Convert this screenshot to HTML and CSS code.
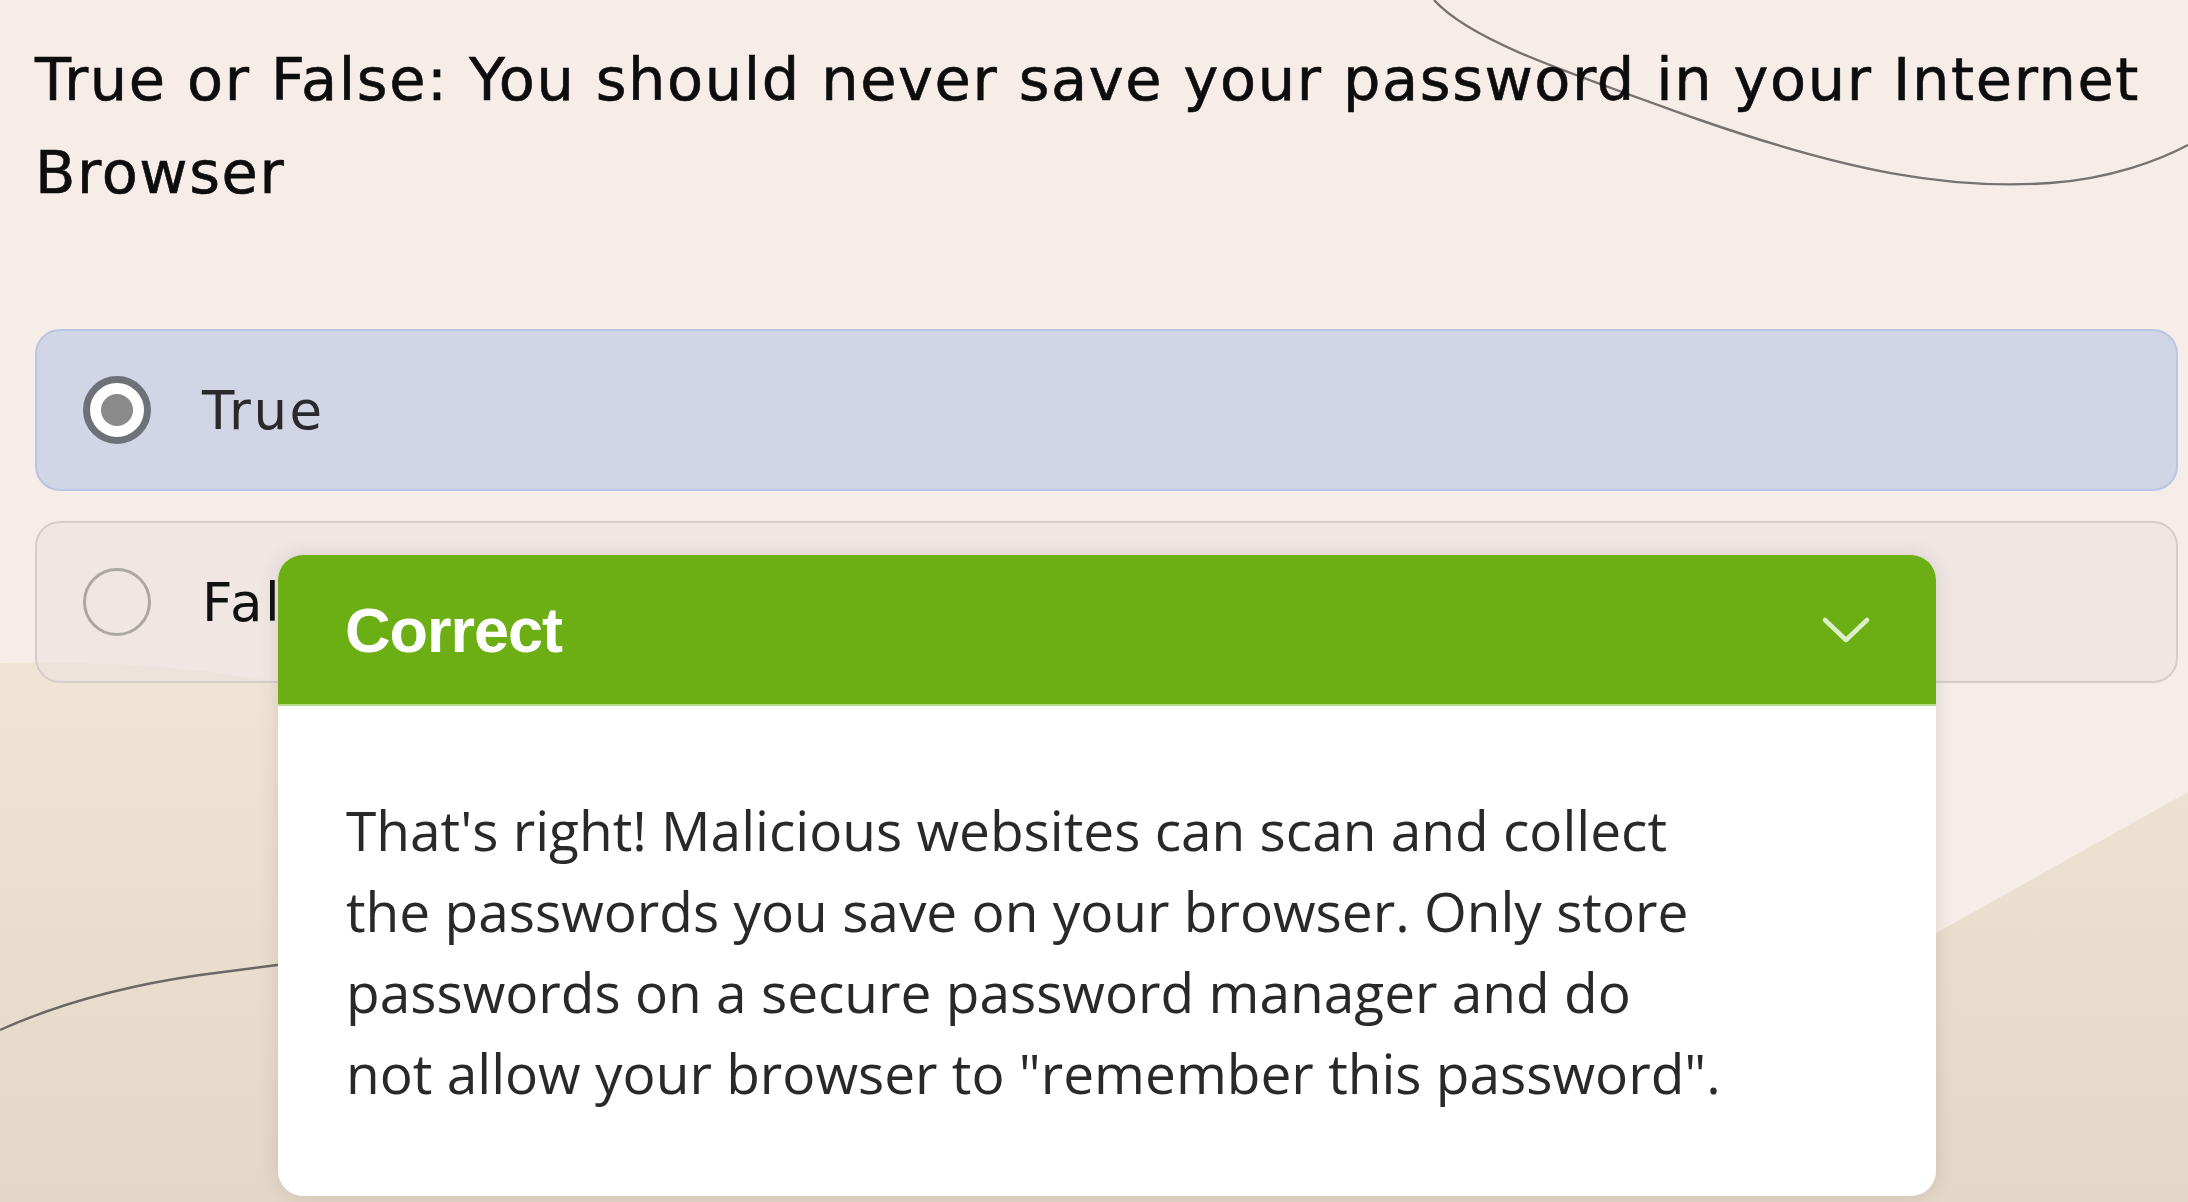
FILE: index.html
```html
<!DOCTYPE html>
<html lang="en">
<head>
<meta charset="utf-8">
<title>Quiz question</title>
<link rel="stylesheet" href="styles.css">
</head>
<body>
<div class="backdrop">
  <svg class="bg-art" width="2188" height="1202" viewBox="0 0 2188 1202" xmlns="http://www.w3.org/2000/svg">
    <defs>
      <linearGradient id="sand" x1="0" y1="0" x2="0" y2="1">
        <stop offset="0" stop-color="#f0e4d4"/>
        <stop offset="1" stop-color="#e3d7c7"/>
      </linearGradient>
    </defs>
    <path d="M0,663 C250,660 340,690 500,760 C900,930 1300,1200 1700,1065 L2188,792 V1202 H0 Z" fill="url(#sand)"/>
    <path d="M1434,0 C1470,40 1560,70 1700,120 C1850,172 1950,190 2050,183 C2110,179 2160,160 2188,145" fill="none" stroke="#767272" stroke-width="2.4"/>
    <path d="M0,1030 C60,1003 130,985 200,975 C240,970 270,966 300,962" fill="none" stroke="#6a6664" stroke-width="2.4"/>
  </svg>
</div>

<main class="quiz">
  <h1 class="question">True or False: You should never save your password in your Internet Browser</h1>
  <div class="options">
    <label class="option option-selected">
      <span class="radio radio-checked"><span class="radio-dot"></span></span>
      <span class="option-text">True</span>
    </label>
    <label class="option">
      <span class="radio"></span>
      <span class="option-text option-text-dark">False</span>
    </label>
  </div>
</main>

<section class="feedback">
  <header class="feedback-head">
    <span class="feedback-title">Correct</span>
    <svg class="chevron" width="48" height="26" viewBox="0 0 48 26" xmlns="http://www.w3.org/2000/svg">
      <path d="M3,3 L24,23 L45,3" fill="none" stroke="#dcefc9" stroke-width="4.5" stroke-linecap="round" stroke-linejoin="round"/>
    </svg>
  </header>
  <div class="feedback-body">
    <p class="feedback-text">That's right! Malicious websites can scan and collect<br>the passwords you save on your browser. Only store<br>passwords on a secure password manager and do<br>not allow your browser to "remember this password".</p>
  </div>
</section>
</body>
</html>
```

FILE: styles.css
```css
html, body {
  margin: 0;
  padding: 0;
}

body {
  width: 2188px;
  height: 1202px;
  overflow: hidden;
  background: #f6ede8;
  position: relative;
  font-family: "DejaVu Sans", "Noto Sans", sans-serif;
}

.backdrop {
  position: absolute;
  inset: 0;
  z-index: 0;
}

.bg-art {
  display: block;
}

.quiz {
  position: relative;
  z-index: 1;
  padding: 33px 10px 0 35px;
}

.question {
  margin: 0;
  font-size: 59px;
  line-height: 93px;
  font-weight: normal;
  color: #0d0d0d;
  letter-spacing: 1.6px;
  -webkit-text-stroke: 0.6px #0d0d0d;
}

.options {
  margin-top: 110px;
  display: flex;
  flex-direction: column;
  gap: 30px;
}

.option {
  box-sizing: border-box;
  height: 162px;
  display: flex;
  align-items: center;
  gap: 51px;
  padding-left: 46px;
  border: 2px solid #d6cdca;
  border-radius: 25px;
  background: rgba(236, 226, 224, 0.62);
}

.option-selected {
  border-color: #b9c5e3;
  background: #d1d5e5;
}

.radio {
  box-sizing: border-box;
  width: 68px;
  height: 68px;
  border-radius: 50%;
  border: 3px solid #aca7a4;
  display: flex;
  align-items: center;
  justify-content: center;
  flex: none;
}

.radio-checked {
  border: 7px solid #6f7179;
  background: #ffffff;
}

.radio-dot {
  width: 32px;
  height: 32px;
  border-radius: 50%;
  background: #8a8a8a;
}

.option-text {
  font-size: 53px;
  color: #2a2a2c;
  letter-spacing: 2.5px;
}

.option-text-dark {
  color: #111111;
}

.feedback {
  position: absolute;
  z-index: 2;
  left: 278px;
  top: 555px;
  width: 1658px;
  height: 641px;
  background: #ffffff;
  border-radius: 25px;
  overflow: hidden;
  box-shadow: 0 0 18px rgba(90, 70, 60, 0.16);
}

.feedback-head {
  box-sizing: border-box;
  height: 151px;
  background: #6caf14;
  border-bottom: 2px solid #b6db8c;
  display: flex;
  align-items: center;
  justify-content: space-between;
  padding: 0 66px 0 67px;
}

.feedback-title {
  font-family: "Liberation Sans", Arial, sans-serif;
  font-weight: bold;
  font-size: 63px;
  letter-spacing: -1px;
  color: #ffffff;
}

.chevron {
  display: block;
}

.feedback-body {
  padding: 83px 0 0 68px;
}

.feedback-text {
  margin: 0;
  width: 1440px;
  font-family: "Open Sans", "Noto Sans", sans-serif;
  font-size: 55px;
  line-height: 81px;
  color: #29292b;
}
```
